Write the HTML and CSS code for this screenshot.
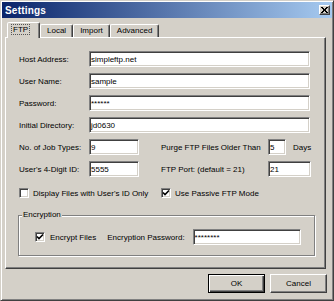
FILE: index.html
```html
<!DOCTYPE html>
<html lang="en">
<head>
  <meta charset="UTF-8" />
  <title>Settings</title>
  <link rel="stylesheet" href="styles.css">
</head>
<body>
  <div class="window">
    <!-- Title bar -->
    <div class="titlebar">
      <span class="title">Settings</span>
      <span class="close">
        <svg width="7" height="6" viewBox="0 0 7 6"><path d="M0 0L6 6M1 0L7 6M6 0L0 6M7 0L1 6" stroke="#000" stroke-width="1"/></svg>
      </span>
    </div>

    <div class="client">
      <!-- Tabs -->
      <div class="tabs">
        <div class="tab active"><span class="focus">FTP</span></div>
        <div class="tab">Local</div>
        <div class="tab">Import</div>
        <div class="tab">Advanced</div>
      </div>

      <!-- FTP page -->
      <div class="panel">
        <div class="rows">
          <div class="row">
            <label class="lbl">Host Address:</label>
            <input class="field wide" type="text" value="simpleftp.net">
          </div>
          <div class="row">
            <label class="lbl">User Name:</label>
            <input class="field wide" type="text" value="sample">
          </div>
          <div class="row">
            <label class="lbl">Password:</label>
            <input class="field wide" type="text" value="******">
          </div>
          <div class="row">
            <label class="lbl">Initial Directory:</label>
            <input class="field wide" type="text" value="jd0630">
          </div>
          <div class="row">
            <label class="lbl">No. of Job Types:</label>
            <input class="field short" type="text" value="9">
            <label class="lbl2">Purge FTP Files Older Than</label>
            <input class="field tiny" type="text" value="5">
            <span class="unit">Days</span>
          </div>
          <div class="row">
            <label class="lbl">User's 4-Digit ID:</label>
            <input class="field short" type="text" value="5555">
            <label class="lbl2">FTP Port: (default = 21)</label>
            <input class="field port" type="text" value="21">
          </div>
        </div>

        <div class="checks">
          <div class="check-item first">
            <span class="box"></span>
            <span>Display Files with User's ID Only</span>
          </div>
          <div class="check-item">
            <span class="box"><svg width="8" height="8" viewBox="0 0 8 8"><path d="M1 3.5L3 5.5L7 1.5" fill="none" stroke="#000" stroke-width="1.6"/></svg></span>
            <span>Use Passive FTP Mode</span>
          </div>
        </div>

        <fieldset class="group">
          <legend>Encryption</legend>
          <div class="enc-row">
            <span class="box"><svg width="8" height="8" viewBox="0 0 8 8"><path d="M1 3.5L3 5.5L7 1.5" fill="none" stroke="#000" stroke-width="1.6"/></svg></span>
            <span class="enc-lbl">Encrypt Files</span>
            <span class="enc-pass">Encryption Password:</span>
            <input class="field enc" type="text" value="********">
          </div>
        </fieldset>
      </div>

      <!-- Buttons -->
      <div class="buttons">
        <button class="btn default">OK</button>
        <button class="btn">Cancel</button>
      </div>
    </div>
  </div>
</body>
</html>
```

FILE: styles.css
```css
html, body { margin:0; padding:0; }
body {
  width:334px;
  height:301px;
  overflow:hidden;
  background:#d4d0c8;
  font-family:"Liberation Sans", Arial, sans-serif;
  font-size:8px;
  color:#000;
}
/* Window frame */
.window {
  box-sizing:border-box;
  width:334px;
  height:301px;
  padding:1px;
  background:#d4d0c8;
  border:1px solid;
  border-color:#d4d0c8 #404040 #404040 #d4d0c8;
  box-shadow:inset 1px 1px #fff, inset -1px -1px #808080;
}
.titlebar {
  height:16px;
  display:flex;
  align-items:center;
  justify-content:space-between;
  padding:0 2px 0 3px;
  background:linear-gradient(to right, #0a246a, #a6caf0);
}
.title {
  color:#fff;
  font-weight:bold;
  font-size:10px;
  letter-spacing:0.2px;
}
.close {
  box-sizing:border-box;
  width:11px;
  height:10px;
  display:flex;
  align-items:center;
  justify-content:center;
  background:#d4d0c8;
  border:1px solid;
  border-color:#fff #404040 #404040 #fff;
  box-shadow:inset -1px -1px #808080;
}
.client { padding:0 6px 0 3px; }
/* Tabs */
.tabs {
  display:flex;
  align-items:flex-end;
  height:15px;
  margin-top:4px;
  padding-left:2px;
}
.tab {
  box-sizing:border-box;
  height:13px;
  line-height:11px;
  padding:0 6px;
  border:1px solid;
  border-bottom:none;
  border-color:#fff #404040 transparent #fff;
  border-radius:2px 2px 0 0;
  box-shadow:inset -1px 0 #808080;
}
.tab.active {
  position:relative;
  z-index:1;
  width:33px;
  height:16px;
  line-height:13px;
  margin-bottom:-1px;
  padding:0 4px;
  background:#d4d0c8;
}
.tab.active .focus {
  outline:1px dotted #555;
  padding:0 1px;
}
/* Page */
.panel {
  box-sizing:border-box;
  height:232px;
  padding:13px 0 0 13px;
  border:1px solid;
  border-color:#fff #404040 #404040 #fff;
  box-shadow:inset -1px -1px #808080;
}
.rows {
  display:flex;
  flex-direction:column;
  gap:6px;
}
.row {
  display:flex;
  align-items:center;
  height:16px;
}
.lbl { width:70px; }
.lbl2 { width:107px; margin-left:22px; }
.unit { margin-left:7px; }
.field {
  box-sizing:border-box;
  height:16px;
  margin:0;
  padding:0 1px;
  font:inherit;
  color:#000;
  background:#fff;
  border:1px solid;
  border-color:#808080 #fff #fff #808080;
  box-shadow:inset 1px 1px #404040, inset -1px -1px #d4d0c8;
  outline:none;
}
.field.wide { width:221px; }
.field.short { width:50px; }
.field.tiny { width:18px; }
.field.port { width:43px; }
.field.enc { width:108px; }
/* Checkboxes */
.checks {
  display:flex;
  align-items:center;
  height:12px;
  margin-top:10px;
}
.check-item {
  display:flex;
  align-items:center;
  gap:4px;
}
.check-item.first { width:142px; }
.box {
  box-sizing:border-box;
  width:10px;
  height:10px;
  display:flex;
  align-items:center;
  justify-content:center;
  background:#fff;
  border:1px solid;
  border-color:#808080 #fff #fff #808080;
  box-shadow:inset 1px 1px #404040, inset -1px -1px #d4d0c8;
}
/* Encryption group */
.group {
  box-sizing:border-box;
  width:297px;
  margin:11px 0 0 -1px;
  padding:9px 0 10px 0;
  border:1px solid #808080;
  box-shadow:inset 1px 1px #fff, 1px 1px #fff;
}
.group legend {
  margin-left:3px;
  padding:0 1px;
  line-height:10px;
  background:#d4d0c8;
}
.enc-row {
  display:flex;
  align-items:center;
  height:16px;
  padding-left:16px;
}
.enc-lbl { margin-left:5px; }
.enc-pass { margin-left:11px; margin-right:8px; }
/* Dialog buttons */
.buttons {
  display:flex;
  justify-content:flex-end;
  gap:5px;
  margin:5px -1px 0 0;
}
.btn {
  box-sizing:border-box;
  width:57px;
  height:19px;
  padding:0;
  font:inherit;
  color:#000;
  background:#d4d0c8;
  border:1px solid;
  border-color:#fff #404040 #404040 #fff;
  box-shadow:inset -1px -1px #808080;
}
.btn.default {
  border:1px solid #000;
  box-shadow:inset 1px 1px #fff, inset -1px -1px #404040, inset -2px -2px #808080;
}
```
